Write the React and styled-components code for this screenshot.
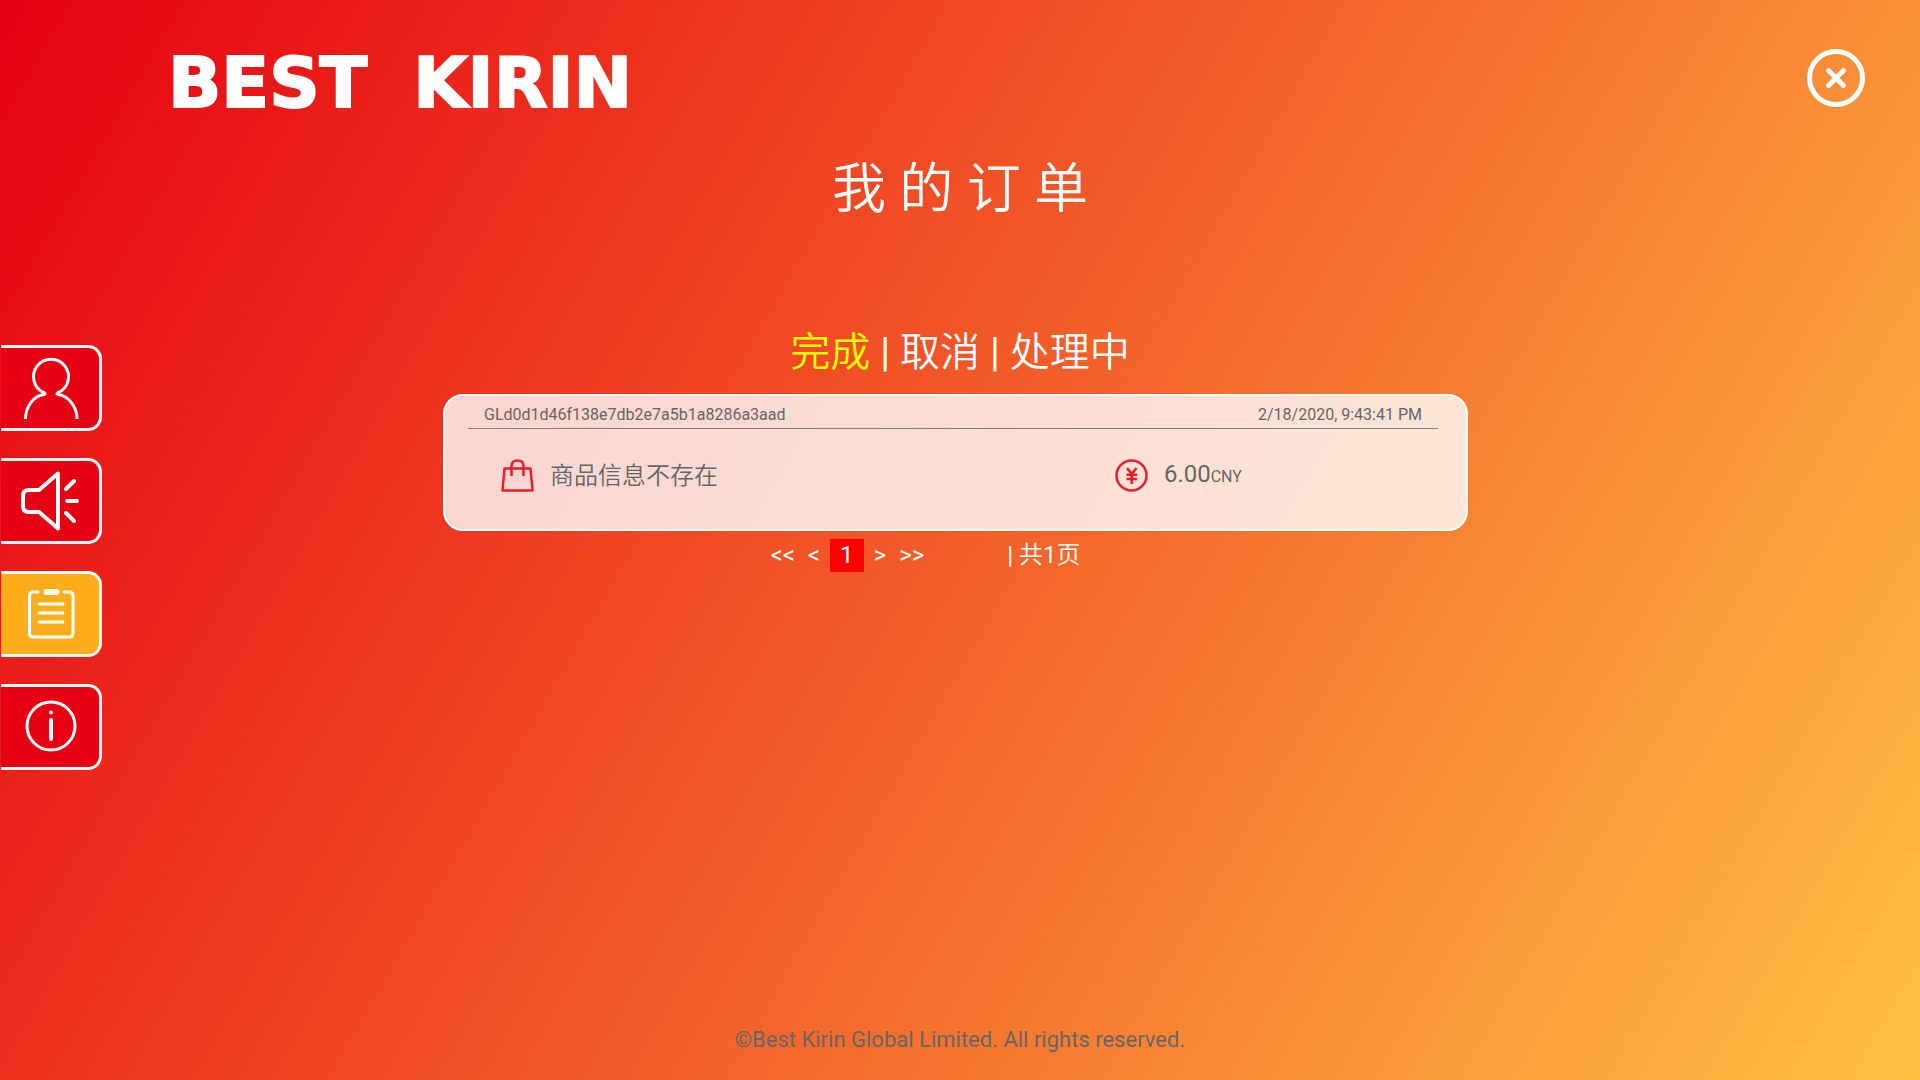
import React, { useState } from 'react';
import styled, { createGlobalStyle } from 'styled-components';

const GlobalStyle = createGlobalStyle`
  * {
    box-sizing: border-box;
  }

  body {
    margin: 0;
    color: #fff;
    font-family: Roboto, 'Noto Sans CJK SC DemiLight', 'Noto Sans CJK SC', sans-serif;
  }

  button {
    padding: 0;
    border: none;
    background: none;
    color: inherit;
    font: inherit;
    cursor: pointer;
  }
`;

const StyledPage = styled.div`
  display: grid;
  grid-template-columns: 102px 1fr 102px;
  grid-template-rows: auto 1fr auto;
  min-height: 100vh;
  background: linear-gradient(120deg, #e60012 0%, #f35e29 50%, #ffc144 100%);
`;

const StyledHeader = styled.header`
  grid-column: 1 / -1;
  display: flex;
  justify-content: space-between;
  align-items: center;
  height: 156px;
  padding: 0 55px 0 168px;
`;

const StyledLogo = styled.div`
  display: flex;
  gap: 46px;
  padding-top: 10px;
  font-family: 'DejaVu Sans', sans-serif;
  font-size: 70px;
  font-weight: 700;
  line-height: 80px;
  -webkit-text-stroke: 2px #fff;
`;

const StyledClose = styled.button`
  width: 58px;
  height: 58px;
`;

const StyledSidebar = styled.nav`
  display: flex;
  flex-direction: column;
  gap: 27px;
  padding: 189px 0 0 1px;
`;

const StyledSideButton = styled.button`
  display: flex;
  align-items: center;
  justify-content: center;
  height: 86px;
  padding-left: 2px;
  border: 3px solid #fff;
  border-left: none;
  border-radius: 0 14px 14px 0;
  background-color: ${({ $active }) => ($active ? '#ffae1b' : '#e60012')};
`;

const StyledMain = styled.main`
  display: flex;
  flex-direction: column;
  align-items: center;
`;

const StyledTitle = styled.h1`
  margin: 2px 0 0;
  font-size: 54px;
  font-weight: 400;
  line-height: 64px;
`;

const StyledTabs = styled.div`
  display: flex;
  gap: 10px;
  margin-top: 107px;
  font-size: 40px;
  line-height: 48px;
`;

const StyledTab = styled.button`
  color: ${({ $active }) => ($active ? '#ff0' : '#fff')};
`;

const StyledOrders = styled.section`
  width: 100%;
  max-width: 1025px;
  margin: 17px 9px 0 0;
`;

const StyledCard = styled.article`
  height: 137px;
  padding: 0 28px 0 23px;
  border: 2px solid #fff;
  border-radius: 20px;
  background-color: rgba(255, 255, 255, 0.8);
  color: #666;
`;

const StyledCardTop = styled.div`
  display: flex;
  justify-content: space-between;
  padding: 8px 16px 2px;
  border-bottom: 1px solid #808080;
  font-size: 16px;
  line-height: 22px;
`;

const StyledCardBody = styled.div`
  display: flex;
  align-items: center;
  padding: 26px 0 0 33px;
`;

const StyledCell = styled.div`
  display: flex;
  align-items: center;
  gap: 16px;
  flex: ${({ $grow }) => $grow};
  font-size: 24px;
  line-height: 38px;

  small {
    font-size: 16px;
  }
`;

const StyledPager = styled.div`
  display: flex;
  align-items: center;
  justify-content: center;
  gap: 83px;
  margin: 8px 60px 0 0;
  font-size: 24px;
  line-height: 33px;
`;

const StyledPages = styled.div`
  display: flex;
`;

const StyledCurrent = styled.button`
  padding: 0 10px;
  background-color: #f00;
`;

const StyledPageLink = styled.button`
  padding-left: ${({ $left }) => $left || 0}px;
  padding-right: ${({ $right }) => $right || 0}px;
`;

const StyledFooter = styled.footer`
  grid-column: 1 / -1;
  padding-bottom: 24px;
  color: #666;
  font-size: 22px;
  line-height: 32px;
  text-align: center;
`;

const LineIcon = ({ children }) => (
  <svg width="60" height="60" viewBox="0 0 60 60" fill="none" stroke="#fff" strokeWidth="3" overflow="visible">
    {children}
  </svg>
);

const UserIcon = () => (
  <LineIcon>
    <path d="M4.500 61C4.500 49 12 38 23 36.500Q25 36 23.500 35A17.500 17.500 0 1 1 36.500 35Q35 36 37 36.500C48 38 56 49 56 61" />
  </LineIcon>
);

const SpeakerIcon = () => (
  <LineIcon>
    <g strokeWidth="4" strokeLinecap="round" strokeLinejoin="round">
      <path d="M18 19H8Q2 19 2 25V35Q2 41 8 41H18L37 57.500V2.500Z" />
      <path d="M45 18L53 10M46 30H56M45 42L53 50" />
    </g>
  </LineIcon>
);

const OrdersIcon = () => (
  <LineIcon>
    <g strokeLinecap="round">
      <path d="M17 8H12Q8.500 8 8.500 12V49Q8.500 53 12 53H48Q52 53 52 49V12Q52 8 48 8H43" />
      <path d="M18 20H42M18 29H42M18 38H42" />
    </g>
    <rect x="22.500" y="5" width="16" height="6" rx="3" fill="#fff" stroke="none" />
  </LineIcon>
);

const InfoIcon = () => (
  <LineIcon>
    <circle cx="30" cy="29" r="24" />
    <path d="M30 23V42" strokeWidth="4" strokeLinecap="round" />
    <circle cx="30" cy="15.500" r="2" fill="#fff" stroke="none" />
  </LineIcon>
);

const BagIcon = () => (
  <svg width="33" height="33" viewBox="0 0 33 33" fill="none" stroke="#eb1c2c" strokeWidth="2.500" strokeLinejoin="round">
    <path d="M3.500 9.500H29.500L31.500 31.500H1.500Z" />
    <path d="M10.500 17V7Q10.500 1.400 16.500 1.400Q22.500 1.400 22.500 7V17" />
  </svg>
);

const YenIcon = () => (
  <svg width="33" height="33" viewBox="0 0 33 33" fill="none" stroke="#eb1c2c" strokeWidth="2.500">
    <circle cx="16.500" cy="16.500" r="15" />
    <path d="M12 9L16.700 15L21.500 9M16.700 15V25M11.500 15.700H22M11.500 20H22" />
  </svg>
);

const sideItems = [
  { key: 'user', label: '用户', Icon: UserIcon },
  { key: 'notice', label: '公告', Icon: SpeakerIcon },
  { key: 'orders', label: '订单', Icon: OrdersIcon },
  { key: 'info', label: '信息', Icon: InfoIcon },
];

const tabs = ['完成', '取消', '处理中'];

const App = () => {
  const [side, setSide] = useState('orders');
  const [tab, setTab] = useState('完成');

  return (
    <>
      <GlobalStyle />
      <StyledPage>
        <StyledHeader>
          <StyledLogo>
            <span>BEST</span>
            <span>KIRIN</span>
          </StyledLogo>
          <StyledClose aria-label="关闭">
            <svg width="58" height="58" viewBox="0 0 58 58" fill="none" stroke="#fff" strokeWidth="5" strokeLinecap="round">
              <circle cx="29" cy="29" r="26.500" />
              <path d="M21.500 21.500L36.500 36.500M36.500 21.500L21.500 36.500" />
            </svg>
          </StyledClose>
        </StyledHeader>
        <StyledSidebar>
          {sideItems.map(({ key, label, Icon }) => (
            <StyledSideButton key={key} aria-label={label} $active={key === side} onClick={() => setSide(key)}>
              <Icon />
            </StyledSideButton>
          ))}
        </StyledSidebar>
        <StyledMain>
          <StyledTitle>我 的 订 单</StyledTitle>
          <StyledTabs>
            {tabs.map((name, i) => (
              <React.Fragment key={name}>
                {i > 0 && <span>|</span>}
                <StyledTab $active={name === tab} onClick={() => setTab(name)}>{name}</StyledTab>
              </React.Fragment>
            ))}
          </StyledTabs>
          <StyledOrders>
            <StyledCard>
              <StyledCardTop>
                <span>GLd0d1d46f138e7db2e7a5b1a8286a3aad</span>
                <span>2/18/2020, 9:43:41 PM</span>
              </StyledCardTop>
              <StyledCardBody>
                <StyledCell $grow={19}>
                  <BagIcon />
                  <span>商品信息不存在</span>
                </StyledCell>
                <StyledCell $grow={10}>
                  <YenIcon />
                  <span>6.00<small>CNY</small></span>
                </StyledCell>
              </StyledCardBody>
            </StyledCard>
            <StyledPager>
              <StyledPages>
                <StyledPageLink $right={13}>&lt;&lt;</StyledPageLink>
                <StyledPageLink $right={10}>&lt;</StyledPageLink>
                <StyledCurrent>1</StyledCurrent>
                <StyledPageLink $left={10}>&gt;</StyledPageLink>
                <StyledPageLink $left={13}>&gt;&gt;</StyledPageLink>
              </StyledPages>
              <span>| 共1页</span>
            </StyledPager>
          </StyledOrders>
        </StyledMain>
        <StyledFooter>©Best Kirin Global Limited. All rights reserved.</StyledFooter>
      </StyledPage>
    </>
  );
};

export default App;
